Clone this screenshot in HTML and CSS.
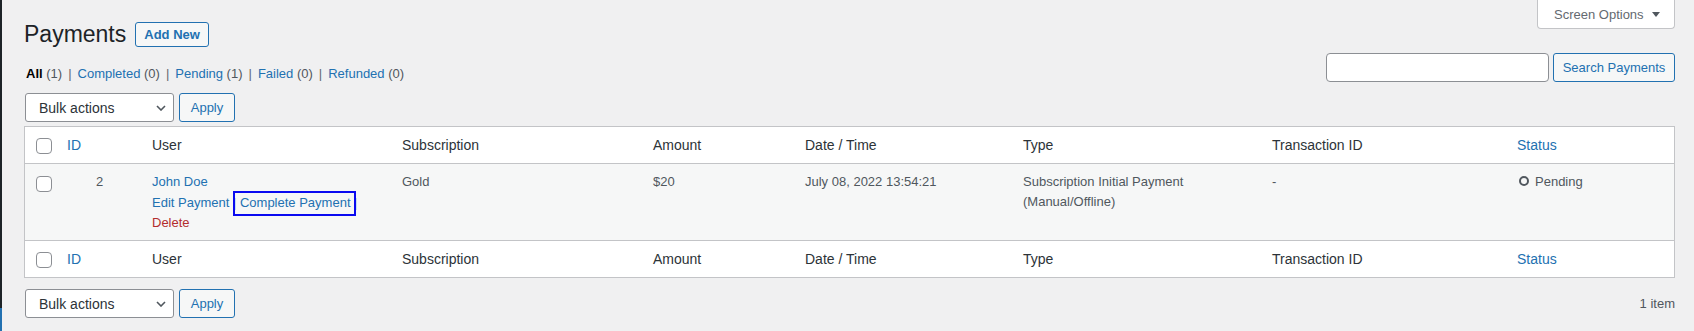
FILE: index.html
```html
<!DOCTYPE html>
<html lang="en">
<head>
<meta charset="utf-8">
<title>Payments</title>
<link rel="stylesheet" href="styles.css">
</head>
<body>
<div class="page">
  <div class="edge"><div class="edge-dark"></div><div class="edge-blue"></div></div>
  <div class="wrap">
    <div class="top">
      <div class="title-row">
        <h1>Payments</h1>
        <a class="add-new" href="#">Add New</a>
      </div>
      <button class="screen-options" type="button">Screen Options<svg class="so-arrow" width="8" height="5" viewBox="0 0 8 5"><polygon points="0,0 8,0 4,5" fill="#50575e"/></svg></button>
    </div>

    <div class="filters">
      <ul class="subsubsub">
        <li><a class="current" href="#">All <span class="count">(1)</span></a><span class="sep">|</span></li><li><a href="#">Completed <span class="count">(0)</span></a><span class="sep">|</span></li><li><a href="#">Pending <span class="count">(1)</span></a><span class="sep">|</span></li><li><a href="#">Failed <span class="count">(0)</span></a><span class="sep">|</span></li><li><a href="#">Refunded <span class="count">(0)</span></a></li>
      </ul>
      <div class="search-box">
        <input class="search-input" type="search" aria-label="Search Payments">
        <button class="btn search-btn" type="button">Search Payments</button>
      </div>
    </div>

    <div class="tablenav nav-top">
      <div class="select-wrap">
        <select class="bulk"><option>Bulk actions</option></select>
        <svg class="chev" width="10" height="6" viewBox="0 0 10 6"><polyline points="1,1 5,5 9,1" fill="none" stroke="#50575e" stroke-width="1.6"/></svg>
      </div>
      <button class="btn apply" type="button">Apply</button>
    </div>

    <table class="list">
      <colgroup>
        <col class="c-check"><col class="c-id"><col class="c-user"><col class="c-sub"><col class="c-amount"><col class="c-date"><col class="c-type"><col class="c-trans"><col class="c-status">
      </colgroup>
      <thead>
        <tr>
          <th class="check"><input type="checkbox" class="cb"></th>
          <th><a href="#" class="sort">ID</a></th>
          <th>User</th>
          <th>Subscription</th>
          <th>Amount</th>
          <th>Date / Time</th>
          <th>Type</th>
          <th>Transaction ID</th>
          <th><a href="#" class="sort">Status</a></th>
        </tr>
      </thead>
      <tbody>
        <tr>
          <th class="check body-check"><input type="checkbox" class="cb"></th>
          <td class="id">2</td>
          <td>
            <a href="#" class="user">John Doe</a>
            <div class="row-actions"><span><a href="#">Edit Payment</a> | </span><span><a href="#" class="focus">Complete Payment</a> | </span><span><a href="#" class="delete">Delete</a></span></div>
          </td>
          <td>Gold</td>
          <td>$20</td>
          <td>July 08, 2022 13:54:21</td>
          <td>Subscription Initial Payment (Manual/Offline)</td>
          <td>-</td>
          <td><span class="dot"></span>Pending</td>
        </tr>
      </tbody>
      <tfoot>
        <tr>
          <th class="check"><input type="checkbox" class="cb"></th>
          <th><a href="#" class="sort">ID</a></th>
          <th>User</th>
          <th>Subscription</th>
          <th>Amount</th>
          <th>Date / Time</th>
          <th>Type</th>
          <th>Transaction ID</th>
          <th><a href="#" class="sort">Status</a></th>
        </tr>
      </tfoot>
    </table>

    <div class="tablenav nav-bottom">
      <div class="select-wrap">
        <select class="bulk"><option>Bulk actions</option></select>
        <svg class="chev" width="10" height="6" viewBox="0 0 10 6"><polyline points="1,1 5,5 9,1" fill="none" stroke="#50575e" stroke-width="1.6"/></svg>
      </div>
      <button class="btn apply" type="button">Apply</button>
      <span class="displaying-num">1 item</span>
    </div>
  </div>
</div>
</body>
</html>
```
FILE: styles.css
```css
html, body {
  margin: 0;
  padding: 0;
}
body {
  background: #f0f0f1;
  font-family: "Liberation Sans", Arial, sans-serif;
  font-size: 13px;
  color: #3c434a;
}
a {
  color: #2271b1;
  text-decoration: none;
}
.page {
  display: flex;
  min-height: 100vh;
}
.edge {
  width: 2px;
  flex-shrink: 0;
  display: flex;
  flex-direction: column;
}
.edge-dark {
  flex: 1;
  background: #1d2327;
}
.edge-blue {
  height: 23px;
  background: #2271b1;
}
.wrap {
  flex: 1;
  min-width: 0;
  padding: 0 19px 0 22px;
}

/* top */
.top {
  display: flex;
  justify-content: space-between;
  align-items: flex-start;
}
.title-row {
  display: flex;
  align-items: center;
  margin-top: 19px;
}
h1 {
  margin: 0;
  font-size: 23px;
  font-weight: 400;
  line-height: 30px;
  color: #1d2327;
}
.add-new {
  margin-left: 9px;
  padding: 4px 8px;
  border: 1px solid #2271b1;
  border-radius: 3px;
  background: #f6f7f7;
  color: #2271b1;
  font-weight: 700;
  font-size: 13px;
  line-height: 15px;
}
.screen-options {
  display: flex;
  align-items: center;
  box-sizing: border-box;
  width: 138px;
  height: 29px;
  padding: 1px 0 0 16px;
  border: 1px solid #c3c4c7;
  border-top: 0;
  border-radius: 0 0 4px 4px;
  background: #fff;
  color: #646970;
  font-family: "Liberation Sans", Arial, sans-serif;
  font-size: 13px;
}
.so-arrow {
  margin-left: 8px;
}

/* filters */
.filters {
  display: flex;
  justify-content: space-between;
  align-items: flex-start;
  margin-top: 4px;
}
.subsubsub {
  list-style: none;
  margin: 8px 0 0;
  padding: 0 0 0 2px;
  line-height: 26px;
  font-size: 13px;
  color: #646970;
  white-space: nowrap;
}
.subsubsub li {
  display: inline;
}
.subsubsub a.current {
  color: #000;
  font-weight: 700;
}
.subsubsub .count {
  color: #50575e;
  font-weight: 400;
}
.subsubsub .sep {
  margin: 0 6px;
  color: #646970;
}
.search-box {
  display: flex;
  gap: 4px;
}
.search-input {
  box-sizing: border-box;
  width: 223px;
  height: 29px;
  margin: 0;
  border: 1px solid #8c8f94;
  border-radius: 4px;
  background: #fff;
}
.btn {
  box-sizing: border-box;
  height: 29px;
  margin: 0;
  padding: 0 10px;
  border: 1px solid #2271b1;
  border-radius: 3px;
  background: #f6f7f7;
  color: #2271b1;
  font-family: "Liberation Sans", Arial, sans-serif;
  font-size: 13px;
  line-height: 27px;
}
.search-btn {
  width: 122px;
  padding: 0;
}

/* tablenav */
.tablenav {
  display: flex;
  align-items: center;
}
.nav-top {
  margin-top: 6px;
}
.nav-bottom {
  margin-top: 11px;
}
.select-wrap {
  position: relative;
  margin-left: 1px;
}
.bulk {
  display: block;
  box-sizing: border-box;
  width: 149px;
  height: 29px;
  margin: 0;
  padding: 0 24px 0 13px;
  border: 1px solid #8c8f94;
  border-radius: 3px;
  background: #fff;
  color: #2c3338;
  font-family: "Liberation Sans", Arial, sans-serif;
  font-size: 14px;
  -webkit-appearance: none;
  appearance: none;
}
.chev {
  position: absolute;
  right: 8px;
  top: 12px;
  pointer-events: none;
}
.apply {
  margin-left: 5px;
  width: 56px;
  padding: 0;
}
.displaying-num {
  margin-left: auto;
  color: #50575e;
  font-size: 13px;
}

/* table */
.list {
  width: 100%;
  table-layout: fixed;
  border-spacing: 0;
  border: 1px solid #c3c4c7;
  background: #fff;
  margin-top: 4px;
}
.c-check { width: 32px; }
.c-id { width: 85px; }
.c-user { width: 250px; }
.c-sub { width: 251px; }
.c-amount { width: 152px; }
.c-date { width: 218px; }
.c-type { width: 249px; }
.c-trans { width: 245px; }
.c-status { width: 167px; }

.list th {
  padding: 8px 10px;
  font-size: 14px;
  line-height: 20px;
  font-weight: 400;
  text-align: left;
  color: #2c3338;
  vertical-align: middle;
}
.list thead th {
  border-bottom: 1px solid #c3c4c7;
}
.list tfoot th {
  border-top: 1px solid #c3c4c7;
}
.list th.check {
  padding: 0 0 0 11px;
}
.list th.body-check {
  padding: 12px 0 0 11px;
  vertical-align: top;
}
.cb {
  display: block;
  box-sizing: border-box;
  width: 16px;
  height: 16px;
  margin: 2px 0 0;
  border: 1px solid #8c8f94;
  border-radius: 4px;
  background: #fff;
  -webkit-appearance: none;
  appearance: none;
}
.body-check .cb {
  margin: 0;
}
.list tbody tr {
  background: #f6f7f7;
}
.list td {
  padding: 8px 10px;
  font-size: 13px;
  line-height: 19.5px;
  color: #50575e;
  vertical-align: top;
}
.list td.id {
  text-align: center;
}
.row-actions {
  padding-top: 1.5px;
  color: #a7aaad;
}
.row-actions .delete {
  color: #b32d2e;
}
.focus {
  position: relative;
}
.focus::after {
  content: "";
  position: absolute;
  top: -4px;
  bottom: -6px;
  left: -7px;
  right: -5px;
  border: 2px solid #0a0af0;
}
.dot {
  display: inline-block;
  box-sizing: border-box;
  width: 10px;
  height: 10px;
  margin: 0 6px 0 2px;
  border: 2px solid #50575e;
  border-radius: 50%;
}
```
